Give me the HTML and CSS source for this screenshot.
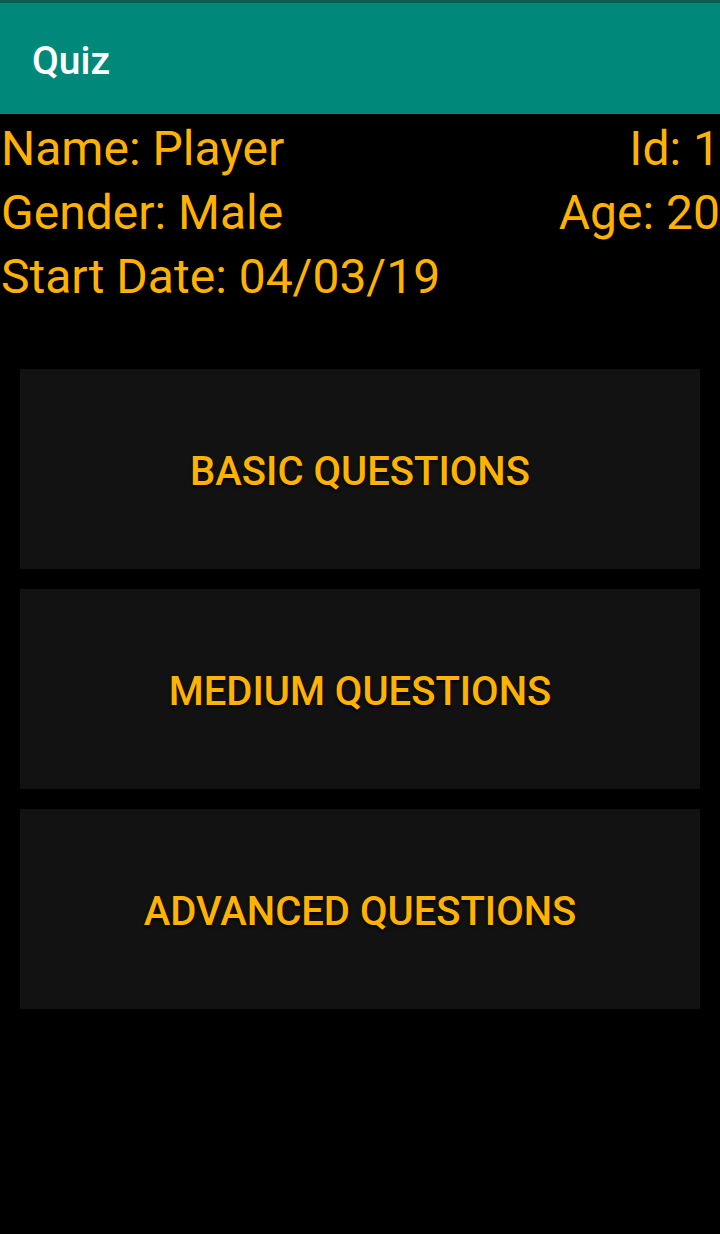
FILE: index.html
```html
<!DOCTYPE html>
<html>
<head>
<meta charset="utf-8">
<link rel="stylesheet" href="styles.css">
</head>
<body>
<header class="appbar">
  <div class="statusline"></div>
  <div class="toolbar"><span class="title">Quiz</span></div>
</header>
<section class="info">
  <div class="row"><span>Name: Player</span><span>Id: 1</span></div>
  <div class="row"><span>Gender: Male</span><span>Age: 20</span></div>
  <div class="row"><span>Start Date: 04/03/19</span></div>
</section>
<main class="buttons">
  <button class="qbtn">BASIC QUESTIONS</button>
  <button class="qbtn">MEDIUM QUESTIONS</button>
  <button class="qbtn">ADVANCED QUESTIONS</button>
</main>
</body>
</html>
```
FILE: styles.css
```css
html, body {
  margin: 0;
  padding: 0;
  background: #000;
  font-family: Roboto, "Noto Sans", sans-serif;
}
.appbar {
  background: #00897b;
}
.statusline {
  height: 3px;
  background: #0d5c4d;
}
.toolbar {
  height: 111px;
  display: flex;
  align-items: center;
  padding-left: 32px;
  padding-top: 4px;
  box-sizing: border-box;
}
.title {
  color: #fff;
  font-size: 39px;
  font-weight: 500;
}
.info {
  color: #ffb300;
  font-size: 48px;
  padding-top: 3px;
}
.row {
  display: flex;
  justify-content: space-between;
  height: 64px;
  line-height: 64px;
  padding-left: 1px;
}
.buttons {
  display: flex;
  flex-direction: column;
  gap: 20px;
  padding: 60px 20px 0;
}
.qbtn {
  height: 200px;
  border: none;
  background: #121212;
  color: #ffb300;
  font-family: Roboto, "Noto Sans", sans-serif;
  font-size: 40px;
  font-weight: 500;
  text-shadow: 0 2px 3px rgba(0,0,0,0.9);
  padding: 5px 0 0;
}
```
